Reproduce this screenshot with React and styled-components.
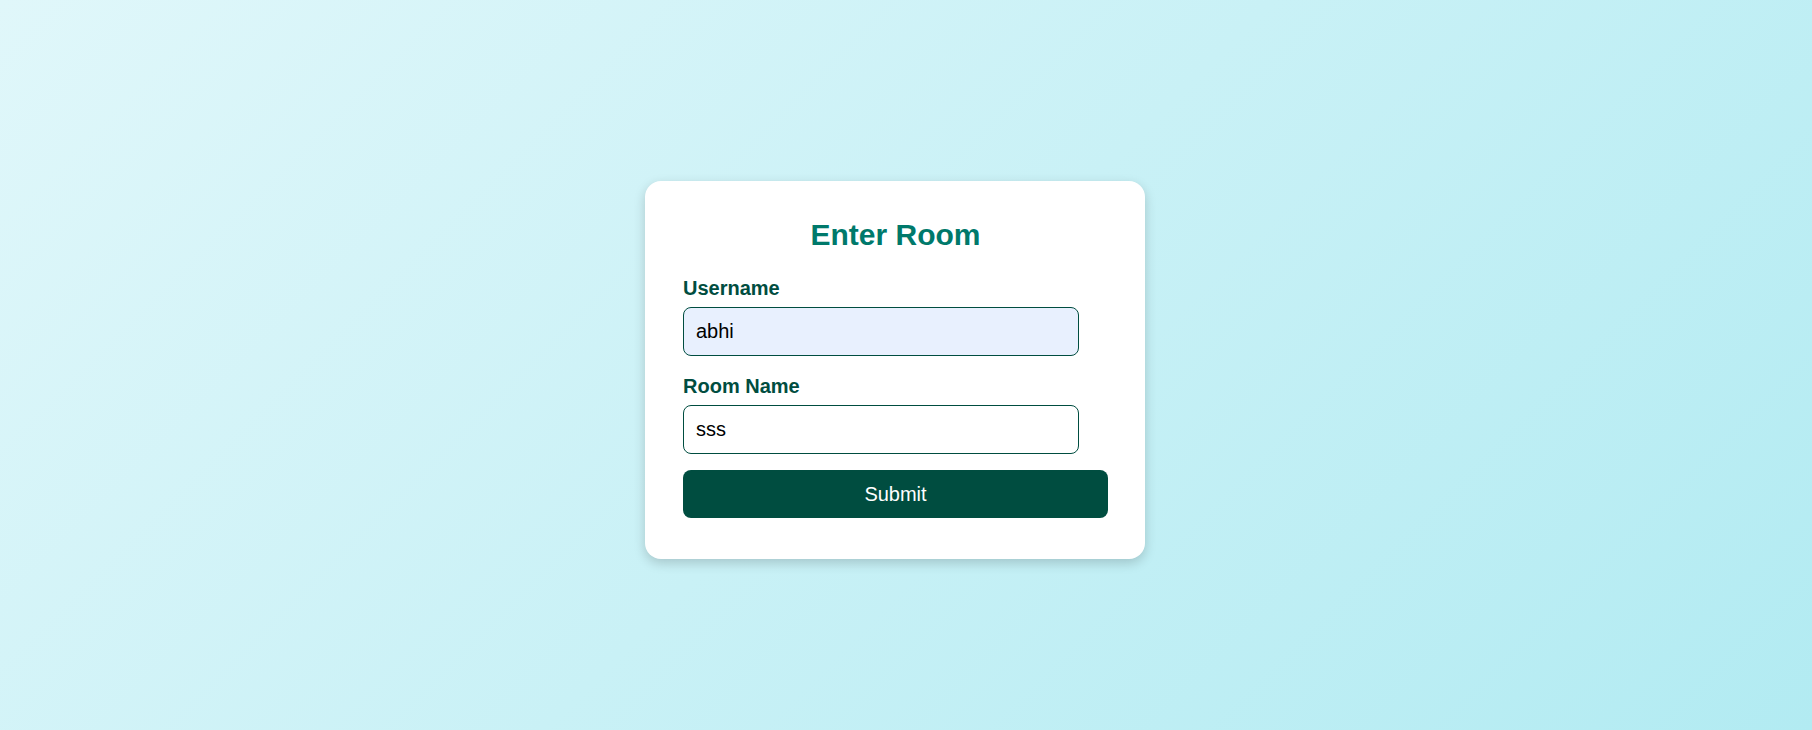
import React, { useState } from 'react';
import styled, { createGlobalStyle } from 'styled-components';

const GlobalStyle = createGlobalStyle`
  * {
    box-sizing: border-box;
  }
  body {
    margin: 0;
    font-family: 'Liberation Sans', Arial, sans-serif;
  }
`;

const App = () => {
  const [username, setUsername] = useState('abhi');
  const [room, setRoom] = useState('sss');

  const handleSubmit = (e) => {
    e.preventDefault();
  };

  return (
    <>
      <GlobalStyle />
      <Page>
        <Card onSubmit={handleSubmit}>
          <Title>Enter Room</Title>
          <Field>
            <Label htmlFor='username'>Username</Label>
            <Input
              id='username'
              value={username}
              $filled
              onChange={(e) => setUsername(e.target.value)}
            />
          </Field>
          <Field>
            <Label htmlFor='room'>Room Name</Label>
            <Input id='room' value={room} onChange={(e) => setRoom(e.target.value)} />
          </Field>
          <Button type='submit'>Submit</Button>
        </Card>
      </Page>
    </>
  );
};

const Page = styled.div`
  min-height: 100vh;
  display: flex;
  justify-content: center;
  align-items: center;
  padding: 10px 22px 0 0;
  background: linear-gradient(135deg, #e0f7fa 0%, #b2ebf2 100%);
`;

const Card = styled.form`
  width: 500px;
  padding: 36px 37px 41px 38px;
  background-color: #ffffff;
  border-radius: 16px;
  box-shadow: 0 4px 12px rgba(0, 0, 0, 0.18);
  display: flex;
  flex-direction: column;
`;

const Title = styled.h2`
  margin: 0 0 25px;
  font-size: 30px;
  line-height: 35px;
  font-weight: 700;
  text-align: center;
  color: #00796b;
`;

const Field = styled.div`
  display: flex;
  flex-direction: column;
  align-items: flex-start;
  margin-bottom: 19px;

  &:last-of-type {
    margin-bottom: 16px;
  }
`;

const Label = styled.label`
  font-size: 20px;
  line-height: 23px;
  font-weight: 700;
  color: #004d40;
  margin-bottom: 7px;
`;

const Input = styled.input`
  width: 396px;
  height: 49px;
  padding: 12px;
  font-family: 'Liberation Sans', Arial, sans-serif;
  font-size: 20px;
  line-height: 23px;
  color: #000000;
  background-color: ${(p) => (p.$filled ? '#e8f0fe' : '#ffffff')};
  border: 1px solid #004d40;
  border-radius: 8px;
  outline: none;
`;

const Button = styled.button`
  width: 100%;
  height: 48px;
  border: none;
  border-radius: 8px;
  background-color: #004d40;
  color: #ffffff;
  font-family: 'Liberation Sans', Arial, sans-serif;
  font-size: 20px;
  cursor: pointer;
`;

export default App;
